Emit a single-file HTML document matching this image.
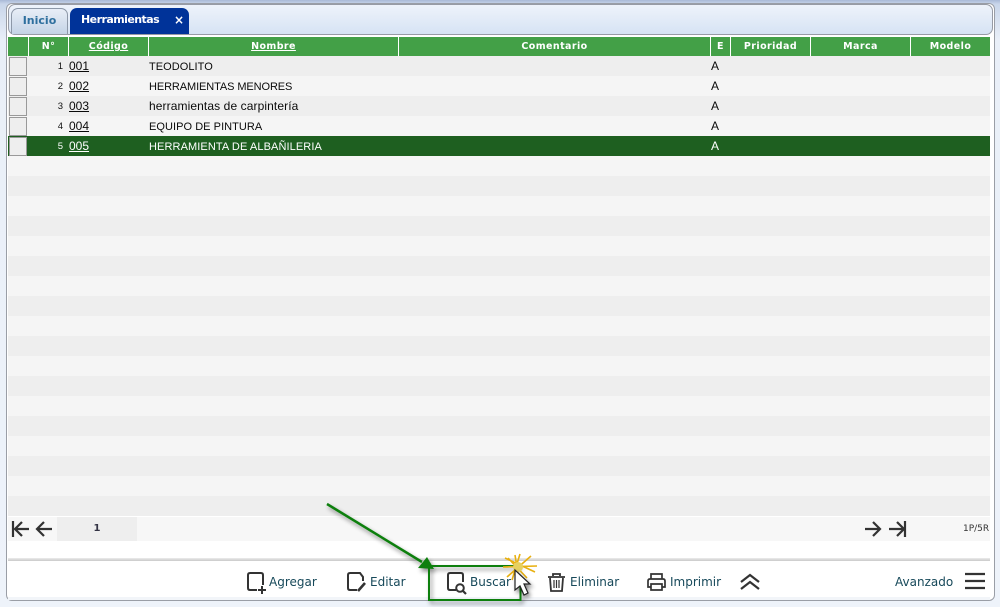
<!DOCTYPE html>
<html><head><meta charset="utf-8"><style>
*{box-sizing:border-box;margin:0;padding:0}
html,body{width:1000px;height:607px;overflow:hidden}
body{position:relative;background:linear-gradient(#a9b9d6 0,#c9d6ea 4px,#e9eff8 40px,#eef3fa 100%);font-family:"Liberation Sans",sans-serif;color:#111}
.a{position:absolute}
#panel{left:6px;top:3px;width:989px;height:598px;background:#fff;border:1px solid #9a9ea6;border-radius:6px}
#tabbar{left:8px;top:4px;width:985px;height:31px;background:linear-gradient(#eef3fb,#d6e3f4);border:1px solid #979ba5;border-radius:7px}
.tab{top:8px;height:26px;border-radius:7px 7px 0 0;font:bold 11px "DejaVu Sans",sans-serif;line-height:24px;text-align:center}
.h{top:37px;height:19px;background:#43a047;color:#fff;font:bold 9.5px "DejaVu Sans",sans-serif;line-height:19px;text-align:center;letter-spacing:.42px}
.h u{text-decoration:underline}
.r{left:8px;width:982px;height:20px}
.t{font-size:12px;line-height:20px;white-space:nowrap;color:#0a0a0a}
.k{font-size:11px;letter-spacing:.05px}
.n{font-size:9.5px;line-height:19px;text-align:right;width:20px;left:43px}
.c{left:9px;width:18px;height:19px;background:#eee;border:1px solid #999}
.lab{top:573px;font-family:"DejaVu Sans",sans-serif;font-size:12px;line-height:18px;color:#17495a;white-space:nowrap}
svg{position:absolute;left:0;top:0}
</style></head><body>
<div class="a" id="panel"></div>
<div class="a" id="tabbar"></div>
<div class="a tab" style="left:11px;width:57px;background:linear-gradient(#e8eef7,#c4d3e6);border:1px solid #8d98a8;border-bottom:0;color:#2e6f9e">Inicio</div>
<div class="a tab" style="left:70px;width:119px;background:#003399;color:#fff;text-align:left;padding-left:11px;letter-spacing:-.55px">Herramientas<span class="a" style="left:104px;top:0;font-size:12px;font-weight:bold">×</span></div>

<div class="a h" style="left:8px;width:20px"></div>
<div class="a h" style="left:29px;width:39px">N°</div>
<div class="a h" style="left:69px;width:79px"><u>Código</u></div>
<div class="a h" style="left:149px;width:249px"><u>Nombre</u></div>
<div class="a h" style="left:399px;width:311px">Comentario</div>
<div class="a h" style="left:711px;width:19px">E</div>
<div class="a h" style="left:731px;width:79px">Prioridad</div>
<div class="a h" style="left:811px;width:99px">Marca</div>
<div class="a h" style="left:911px;width:79px">Modelo</div>

<div class="a r" style="top:56px;background:#eee"></div>
<div class="a r" style="top:76px;background:#f5f5f5"></div>
<div class="a r" style="top:96px;background:#eee"></div>
<div class="a r" style="top:116px;background:#f5f5f5"></div>
<div class="a r" style="top:136px;background:#1e5f20"></div>
<div class="a r" style="top:156px;background:#f5f5f5"></div>
<div class="a r" style="top:176px;background:#eee"></div>
<div class="a r" style="top:196px;background:#f5f5f5"></div>
<div class="a r" style="top:216px;background:#eee"></div>
<div class="a r" style="top:236px;background:#f5f5f5"></div>
<div class="a r" style="top:256px;background:#eee"></div>
<div class="a r" style="top:276px;background:#f5f5f5"></div>
<div class="a r" style="top:296px;background:#eee"></div>
<div class="a r" style="top:316px;background:#f5f5f5"></div>
<div class="a r" style="top:336px;background:#eee"></div>
<div class="a r" style="top:356px;background:#f5f5f5"></div>
<div class="a r" style="top:376px;background:#eee"></div>
<div class="a r" style="top:396px;background:#f5f5f5"></div>
<div class="a r" style="top:416px;background:#eee"></div>
<div class="a r" style="top:436px;background:#f5f5f5"></div>
<div class="a r" style="top:456px;background:#eee"></div>
<div class="a r" style="top:476px;background:#f5f5f5"></div>
<div class="a r" style="top:496px;background:#eee"></div>

<div class="a c" style="top:57px"></div><div class="a n" style="top:57px">1</div><div class="a t" style="left:69px;top:56px"><u>001</u></div><div class="a t k" style="left:149px;top:57px">TEODOLITO</div><div class="a t" style="left:711px;top:56px">A</div>
<div class="a c" style="top:77px"></div><div class="a n" style="top:77px">2</div><div class="a t" style="left:69px;top:76px"><u>002</u></div><div class="a t k" style="left:149px;top:77px;letter-spacing:-.1px">HERRAMIENTAS MENORES</div><div class="a t" style="left:711px;top:76px">A</div>
<div class="a c" style="top:97px"></div><div class="a n" style="top:97px">3</div><div class="a t" style="left:69px;top:96px"><u>003</u></div><div class="a t" style="left:149px;top:96px;letter-spacing:.1px">herramientas de carpintería</div><div class="a t" style="left:711px;top:96px">A</div>
<div class="a c" style="top:117px"></div><div class="a n" style="top:117px">4</div><div class="a t" style="left:69px;top:116px"><u>004</u></div><div class="a t k" style="left:149px;top:117px">EQUIPO DE PINTURA</div><div class="a t" style="left:711px;top:116px">A</div>
<div class="a c" style="top:137px"></div><div class="a n" style="top:137px;color:#fff">5</div><div class="a t" style="left:69px;top:136px;color:#fff"><u>005</u></div><div class="a t k" style="left:149px;top:137px;color:#fff;letter-spacing:.1px">HERRAMIENTA DE ALBAÑILERIA</div><div class="a t" style="left:711px;top:136px;color:#fff">A</div>

<div class="a" style="left:8px;top:517px;width:982px;height:24px;background:#f7f7f7"></div>
<div class="a" style="left:57px;top:517px;width:80px;height:24px;background:#eee;font:bold 10px 'DejaVu Sans',sans-serif;line-height:24px;text-align:center;color:#334">1</div>
<div class="a" style="left:963px;top:522px;font:9px 'DejaVu Sans',sans-serif;line-height:14px;color:#333;white-space:nowrap">1P/5R</div>

<div class="a" style="left:8px;top:558px;width:982px;height:3px;background:linear-gradient(#ececec,#c9c9c9)"></div>
<div class="a" style="left:8px;top:597px;width:982px;height:3px;background:#f2f5f9"></div>

<div class="a lab" style="left:269px">Agregar</div>
<div class="a lab" style="left:370px">Editar</div>
<div class="a lab" style="left:470px">Buscar</div>
<div class="a lab" style="left:570px">Eliminar</div>
<div class="a lab" style="left:670px">Imprimir</div>
<div class="a lab" style="left:895px">Avanzado</div>

<svg width="1000" height="607" viewBox="0 0 1000 607" fill="none">
<defs><filter id="s" x="-50%" y="-50%" width="200%" height="200%"><feDropShadow dx="2" dy="3" stdDeviation="2" flood-color="#000" flood-opacity=".45"/></filter></defs>
<!-- pager -->
<g stroke="#333" stroke-width="2.200">
<path d="M13 521V537M29 529H15M22 522L15 529L22 536"/>
<path d="M52 529H38M44 522L37 529L44 536"/>
<path d="M865 529H879M873 522L880 529L873 536"/>
<path d="M889 529H903M897 522L904 529L897 536M905 521V537"/>
</g>
<g stroke="#333" stroke-width="2">
<!-- agregar -->
<path d="M257 590H250Q248 590 248 588V575Q248 573 250 573H261Q263 573 263 575V585"/>
<path d="M262 586V594M258 590H266"/>
<!-- editar -->
<path d="M357 590H350Q348 590 348 588V575Q348 573 350 573H360L363 577V581"/>
<path d="M358 591L365 583" stroke-width="2.600"/>
<!-- buscar -->
<path d="M456 590H450Q448 590 448 588V575Q448 573 450 573H461Q463 573 463 575V582"/>
<circle cx="460" cy="588" r="3.800"/><path d="M463 591L466 594" stroke-width="2.200"/>
<!-- eliminar -->
<path d="M548 577H565M553 576V574H560V576M550 578L551 591H562L563 578" stroke-width="1.800"/>
<path d="M554 580V588M556.500 580V588M559 580V588" stroke-width="1.200"/>
<!-- imprimir -->
<path d="M651 579V574H662V579M651 587H648V581Q648 579 650 579H663Q665 579 665 581V587H662M651 584H662V590H651Z" stroke-width="1.700"/>
</g>
<path d="M741 582L750 575L759 582M741 589L750 582L759 589" stroke="#333" stroke-width="2.200"/>
<path d="M965 574H985M965 581H985M965 588H985" stroke="#333" stroke-width="2.200"/>
<!-- green box + arrow -->
<g filter="url(#s)">
<path d="M429 566H520M429 565V600M428 600H520.500V583" stroke="#0f7f10" stroke-width="2"/>
<path d="M327 504L422 562" stroke="#0f7f10" stroke-width="2.500"/>
<path d="M434 569L418 568L427 557Z" fill="#0f7f10"/>
</g>
<!-- star -->
<g stroke="#e8b010" stroke-width="1.600">
<path d="M505 558L535 572M503 567L537 566M507 577L531 556M512 580L520 554M519 580L515 555M527 578L508 558"/>
</g>
<circle cx="518" cy="567" r="5" fill="#e6d060"/>
<!-- cursor -->
<path d="M515 570V590L520 586L524 595L528 593L524 584L530 584Z" fill="#fff" stroke="#222" stroke-width="1.200" filter="url(#s)"/>
</svg>
</body></html>
